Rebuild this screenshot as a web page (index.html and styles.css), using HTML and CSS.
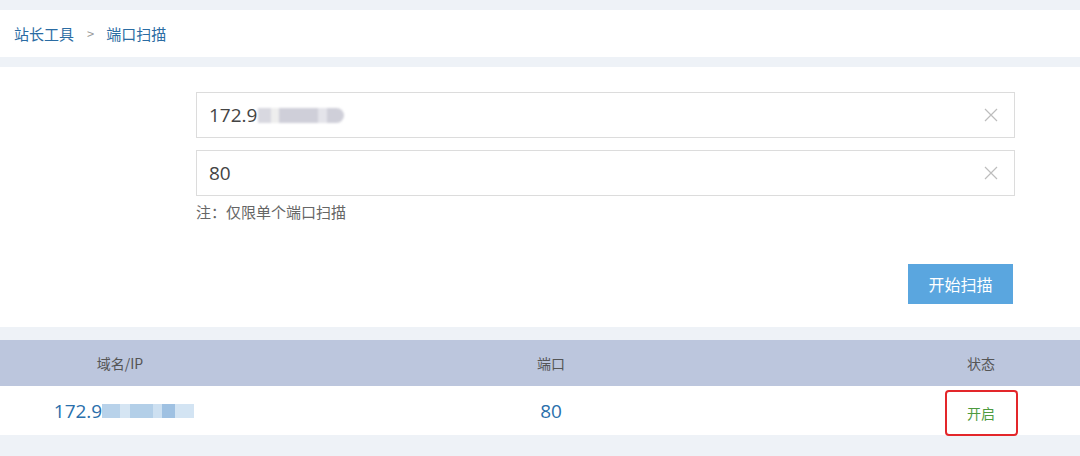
FILE: index.html
```html
<!DOCTYPE html>
<html lang="zh-CN">
<head>
  <meta charset="UTF-8" />
  <meta name="viewport" content="width=device-width, initial-scale=1.0"/>
  <title>端口扫描</title>
  <link rel="stylesheet" href="styles.css">
</head>
<body>

  <div class="crumbs">
    <a href="#">站长工具</a>
    <span class="sep">&gt;</span>
    <a href="#">端口扫描</a>
  </div>

  <div class="panel">
    <div class="field">
      <span class="value">172.9<span class="blur"></span></span>
      <svg class="clear" width="14" height="14" viewBox="0 0 14 14"><path d="M1 1L13 13M13 1L1 13" stroke="#bdbdbd" stroke-width="1.2" fill="none"/></svg>
    </div>
    <div class="field second">
      <span class="value">80</span>
      <svg class="clear" width="14" height="14" viewBox="0 0 14 14"><path d="M1 1L13 13M13 1L1 13" stroke="#bdbdbd" stroke-width="1.2" fill="none"/></svg>
    </div>
    <div class="note">注：仅限单个端口扫描</div>

    <div class="actions">
      <button>开始扫描</button>
    </div>
  </div>

  <div class="table">
    <div class="row head">
      <div>域名/IP</div>
      <div>端口</div>
      <div class="last">状态</div>
    </div>
    <div class="row body">
      <div class="ip">172.9<span class="blur"></span></div>
      <div class="port">80</div>
      <div class="last"><span class="status">开启</span></div>
    </div>
  </div>

</body>
</html>
```

FILE: styles.css
```css
body {
  margin: 0;
  font-family: "Noto Sans CJK SC", "Open Sans", sans-serif;
  background: #eef2f7;
  padding-top: 10px;
  height: 446px;
  overflow: hidden;
}

.crumbs {
  background: #fff;
  height: 47px;
  display: flex;
  align-items: center;
  padding-left: 14px;
  font-size: 15px;
}

.crumbs a {
  color: #2b6ca3;
  text-decoration: none;
}

.sep {
  color: #999;
  margin: 0 12px 0 13px;
  font-size: 13px;
}

.panel {
  background: #fff;
  margin-top: 10px;
  height: 260px;
  padding: 25px 65px 0 196px;
  box-sizing: border-box;
}

.field {
  height: 46px;
  border: 1px solid #dcdcdc;
  box-sizing: border-box;
  display: flex;
  align-items: center;
  justify-content: space-between;
  padding: 0 16px 0 12px;
}

.field.second {
  margin-top: 12px;
}

.value {
  font-family: "Open Sans", sans-serif;
  font-size: 19px;
  color: #444;
  display: flex;
  align-items: center;
}

.value .blur {
  display: inline-block;
  width: 86px;
  height: 15px;
  margin-left: 1px;
  background: linear-gradient(to right, #d8d8e0 0 15%, #eee 15% 25%, #cfcfd9 25% 70%, #e4e4ea 70% 80%, #cfcfd9 80% 100%);
  border-radius: 0 10px 10px 0;
  filter: blur(1px);
}

.note {
  font-size: 15px;
  color: #666;
  margin-top: 5px;
}

.actions {
  display: flex;
  justify-content: flex-end;
  margin-top: 42px;
  padding-right: 2px;
}

button {
  background: #5aa6df;
  color: #fff;
  border: none;
  font-family: inherit;
  font-size: 16px;
  width: 105px;
  height: 40px;
  padding: 0;
}

.table {
  margin-top: 13px;
}

.row {
  display: grid;
  grid-template-columns: 240px 622px 1fr;
  align-items: center;
  text-align: center;
}

.row .last {
  padding-left: 20px;
}

.head {
  background: #bcc6dd;
  height: 46px;
  font-size: 14px;
  color: #555;
}

.body {
  background: #fff;
  height: 49px;
}

.ip, .port {
  font-family: "Open Sans", sans-serif;
  font-size: 19px;
  color: #2a6fab;
}

.ip {
  display: flex;
  justify-content: center;
  align-items: center;
  padding-left: 8px;
}

.ip .blur {
  display: inline-block;
  width: 92px;
  height: 14px;
  background: linear-gradient(to right, #b8d2ea 0 20%, #d5e5f3 20% 30%, #b3cfe8 30% 55%, #cde0f1 55% 65%, #9fc1e2 65% 79%, #d3e4f3 79% 100%);
}

.status {
  display: inline-block;
  width: 73px;
  height: 46px;
  line-height: 42px;
  box-sizing: border-box;
  border: 2px solid #e3262a;
  border-radius: 4px;
  color: #4d9a3e;
  font-size: 14px;
  margin-top: 4px;
}
```
